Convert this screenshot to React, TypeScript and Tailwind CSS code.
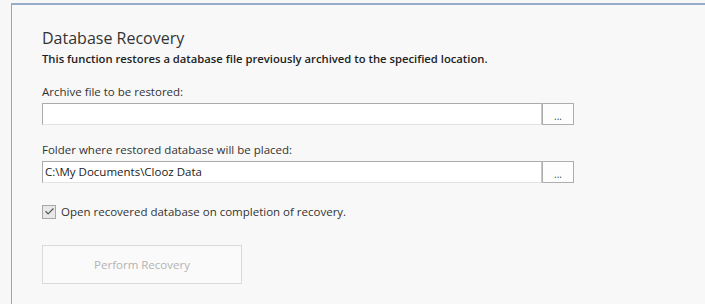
import { Check } from "lucide-react";

const FONT = "font-['Open_Sans','Noto_Sans',sans-serif]";

function PathField({ label, value }: { label: string; value: string }) {
  return (
    <div className="flex flex-col">
      <label className="text-[11.5px] leading-[16px] text-[#333]">{label}</label>
      <div className="mt-[3px] flex h-[22px]">
        <div className="flex h-full w-[500px] items-center border border-t-[#ababab] border-l-[#ababab] border-r-[#c8c8c8] border-b-[#e3e3e3] bg-white px-[2px] text-[11.5px] text-[#222]">
          {value}
        </div>
        <button className="flex h-full w-[32px] items-center justify-center border border-[#adadad] bg-[#fdfdfd] pt-[4px] text-[10px] leading-none text-[#444]">
          ...
        </button>
      </div>
    </div>
  );
}

export default function App() {
  return (
    <div className={`h-[304px] w-[705px] overflow-hidden bg-[#f7f7f7] pl-[11px] pt-[3px] ${FONT}`}>
      <div className="h-full border-l border-t-2 border-l-[#8fa6c8] border-t-[#97acc9] bg-[#f8f8f8] pl-[30px]">
        <h1 className="mt-[22px] text-[16px] leading-[22px] text-[#333]">Database Recovery</h1>
        <p className="mt-[2px] text-[11.25px] font-semibold leading-[16px] text-[#222]">
          This function restores a database file previously archived to the specified location.
        </p>

        <div className="mt-[17px]">
          <PathField label="Archive file to be restored:" value="" />
        </div>
        <div className="mt-[17px]">
          <PathField label="Folder where restored database will be placed:" value="C:\My Documents\Clooz Data" />
        </div>

        <label className="mt-[20px] flex items-center gap-[5px] text-[11.5px] text-[#333]">
          <span className="flex h-[14px] w-[14px] items-center justify-center border border-[#a8a8a8] bg-[#e8e8e8]">
            <Check size={11} strokeWidth={2.5} className="text-[#555]" />
          </span>
          Open recovered database on completion of recovery.
        </label>

        <button className="mt-[25px] flex h-[39px] w-[200px] items-center justify-center border border-[#dadada] bg-[#fafafa] text-[11.5px] text-[#b3b3b3]">
          Perform Recovery
        </button>
      </div>
    </div>
  );
}
